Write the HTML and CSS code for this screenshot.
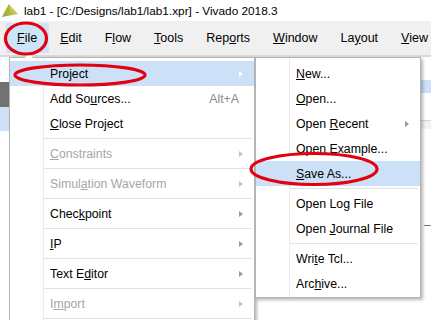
FILE: index.html
```html
<!DOCTYPE html>
<html>
<head>
  <meta charset="UTF-8">
  <title>lab1 - Vivado 2018.3</title>
  <link rel="stylesheet" href="styles.css">
</head>
<body>
  <div class="window">
    <div class="titlebar">
      <svg class="logo" viewBox="0 0 17 17">
        <defs>
          <linearGradient id="lg" x1="0" y1="1" x2="1" y2="0">
            <stop offset="0" stop-color="#8aa030"/>
            <stop offset="1" stop-color="#f4e27a"/>
          </linearGradient>
        </defs>
        <polygon points="0,15 7,2 16,12" fill="url(#lg)"/>
        <polygon points="0,15 7,2 8,9" fill="#a9b440"/>
      </svg>
      <span class="title">lab1 - [C:/Designs/lab1/lab1.xpr] - Vivado 2018.3</span>
    </div>

    <div class="menubar">
      <span class="menubar-item active"><span><u>F</u>ile</span></span>
      <span class="menubar-item"><span><u>E</u>dit</span></span>
      <span class="menubar-item"><span>F<u>l</u>ow</span></span>
      <span class="menubar-item"><span><u>T</u>ools</span></span>
      <span class="menubar-item"><span>Rep<u>o</u>rts</span></span>
      <span class="menubar-item"><span><u>W</u>indow</span></span>
      <span class="menubar-item"><span>La<u>y</u>out</span></span>
      <span class="menubar-item"><span><u>V</u>iew</span></span>
    </div>

    <div class="workspace">
      <div class="panel-left">
        <div class="bg-row"></div>
        <div class="bg-row header"></div>
        <div class="bg-row selected"></div>
      </div>
      <div class="panel-right">
        <div class="bg-row short"></div>
        <div class="bg-row selected thin"></div>
        <div class="bg-row tall"></div>
        <div class="bg-row stripe"></div>
        <div class="bg-row spacer"></div>
        <div class="bg-row label">_b</div>
      </div>
    </div>

    <div class="menu file-menu">
      <div class="menu-item active"><span>Project</span><span class="arrow"></span></div>
      <div class="menu-item"><span>Add So<u>u</u>rces...</span><span class="shortcut">Alt+A</span></div>
      <div class="menu-item"><span><u>C</u>lose Project</span></div>
      <div class="separator"></div>
      <div class="menu-item disabled"><span><u>C</u>onstraints</span><span class="arrow"></span></div>
      <div class="separator"></div>
      <div class="menu-item disabled"><span>Simul<u>a</u>tion Waveform</span><span class="arrow"></span></div>
      <div class="separator"></div>
      <div class="menu-item"><span>Chec<u>k</u>point</span><span class="arrow"></span></div>
      <div class="separator"></div>
      <div class="menu-item"><span><u>I</u>P</span><span class="arrow"></span></div>
      <div class="separator"></div>
      <div class="menu-item"><span>Text E<u>d</u>itor</span><span class="arrow"></span></div>
      <div class="separator"></div>
      <div class="menu-item disabled"><span>I<u>m</u>port</span><span class="arrow"></span></div>
      <div class="separator"></div>
    </div>

    <div class="menu sub-menu">
      <div class="menu-item"><span><u>N</u>ew...</span></div>
      <div class="menu-item"><span><u>O</u>pen...</span></div>
      <div class="menu-item"><span>Open <u>R</u>ecent</span><span class="arrow"></span></div>
      <div class="menu-item"><span>Open E<u>x</u>ample...</span></div>
      <div class="menu-item active"><span><u>S</u>ave As...</span></div>
      <div class="separator"></div>
      <div class="menu-item"><span>Open Lo<u>g</u> File</span></div>
      <div class="menu-item"><span>Open <u>J</u>ournal File</span></div>
      <div class="separator"></div>
      <div class="menu-item"><span>Wri<u>t</u>e Tcl...</span></div>
      <div class="menu-item"><span>Arc<u>h</u>ive...</span></div>
    </div>

    <svg class="marks" viewBox="0 0 431 320">
      <ellipse cx="26" cy="38.5" rx="20.5" ry="15.5"/>
      <ellipse cx="80" cy="75" rx="65" ry="10"/>
      <ellipse cx="314" cy="169" rx="63" ry="15.5"/>
    </svg>
  </div>
</body>
</html>
```

FILE: styles.css
```css
:root {
  --bar: #f0f0f0;
  --hover: #cce0f7;
  --text: #000000;
  --disabled: #a6a6a6;
  --muted: #8c8c8c;
  --line: #e2e2e2;
  --mark: #e3000f;
}

body {
  margin: 0;
  font-family: "Liberation Sans", Arial, sans-serif;
  color: var(--text);
  background: #ffffff;
}

.window {
  position: relative;
  width: 431px;
  height: 320px;
  overflow: hidden;
}

.titlebar {
  height: 21px;
  display: flex;
  align-items: center;
  padding-left: 2px;
  background: #ffffff;
  font-size: 11.8px;
}

.logo {
  width: 17px;
  height: 17px;
  margin-right: 5px;
}

.menubar {
  height: 34px;
  display: flex;
  align-items: center;
  padding-left: 5.5px;
  background: var(--bar);
  font-size: 12.5px;
}

.menubar-item {
  height: 30px;
  padding: 0 11.5px;
  display: flex;
  align-items: center;
}

.menubar-item.active {
  background: #cce4f7;
}

u {
  text-underline-offset: 1px;
}

/* background behind the menus */
.workspace {
  display: flex;
  height: 263px;
  border-top: 2px solid #d8d8d8;
}

.panel-left {
  width: 256px;
}

.panel-right {
  flex: 1;
  overflow: hidden;
}

.bg-row {
  height: 25px;
}

.bg-row.header {
  background: #727272;
}

.bg-row.selected {
  height: 24px;
  background: var(--hover);
}

.bg-row.short {
  height: 23px;
}

.bg-row.thin {
  height: 13px;
}

.bg-row.tall {
  height: 27px;
  border-bottom: 1px solid #d6d6d6;
}

.bg-row.stripe {
  height: 8px;
  background: #f3f3f3;
}

.bg-row.spacer {
  height: 84px;
}

.bg-row.label {
  height: 20px;
  padding-left: 168px;
  font-size: 12px;
  font-weight: bold;
  white-space: nowrap;
}

/* popup menus */
.menu {
  position: absolute;
  top: 57px;
  box-sizing: border-box;
  border: 1px solid #b5b5b5;
  padding: 3px 0 1px;
  font-size: 12.3px;
  background: linear-gradient(to right, #ffffff 33px, #ececec 33px, #ececec 34px, #ffffff 34px);
  box-shadow: 2px 2px 3px rgba(0, 0, 0, 0.28);
}

.file-menu {
  left: 9px;
  width: 246px;
  height: 280px;
}

.file-menu:before {
  content: "";
  position: absolute;
  top: -5px;
  left: 15px;
  border-left: 4px solid transparent;
  border-right: 4px solid transparent;
  border-bottom: 5px solid #ffffff;
}

.sub-menu {
  left: 255px;
  width: 166px;
}

.menu-item {
  height: 25px;
  display: flex;
  align-items: center;
  padding-left: 40px;
  white-space: nowrap;
}

.menu-item.active {
  background: var(--hover);
}

.menu-item.disabled {
  color: var(--disabled);
}

.shortcut {
  margin-left: auto;
  margin-right: 15px;
  color: var(--muted);
}

.arrow {
  margin-left: auto;
  margin-right: 11px;
  width: 0;
  height: 0;
  border-top: 3.5px solid transparent;
  border-bottom: 3.5px solid transparent;
  border-left: 4px solid #9a9a9a;
}

.menu-item.active .arrow {
  border-left-color: #ffffff;
}

.menu-item.disabled .arrow {
  border-left-color: #c4c4c4;
}

.separator {
  height: 5px;
  display: flex;
  align-items: center;
}

.separator:after {
  content: "";
  flex: 1;
  height: 1px;
  margin-left: 34px;
  margin-right: 2px;
  background: var(--line);
}

.marks {
  position: absolute;
  left: 0;
  top: 0;
  width: 431px;
  height: 320px;
  pointer-events: none;
}

.marks ellipse {
  fill: none;
  stroke: var(--mark);
  stroke-width: 3.2;
}
```
